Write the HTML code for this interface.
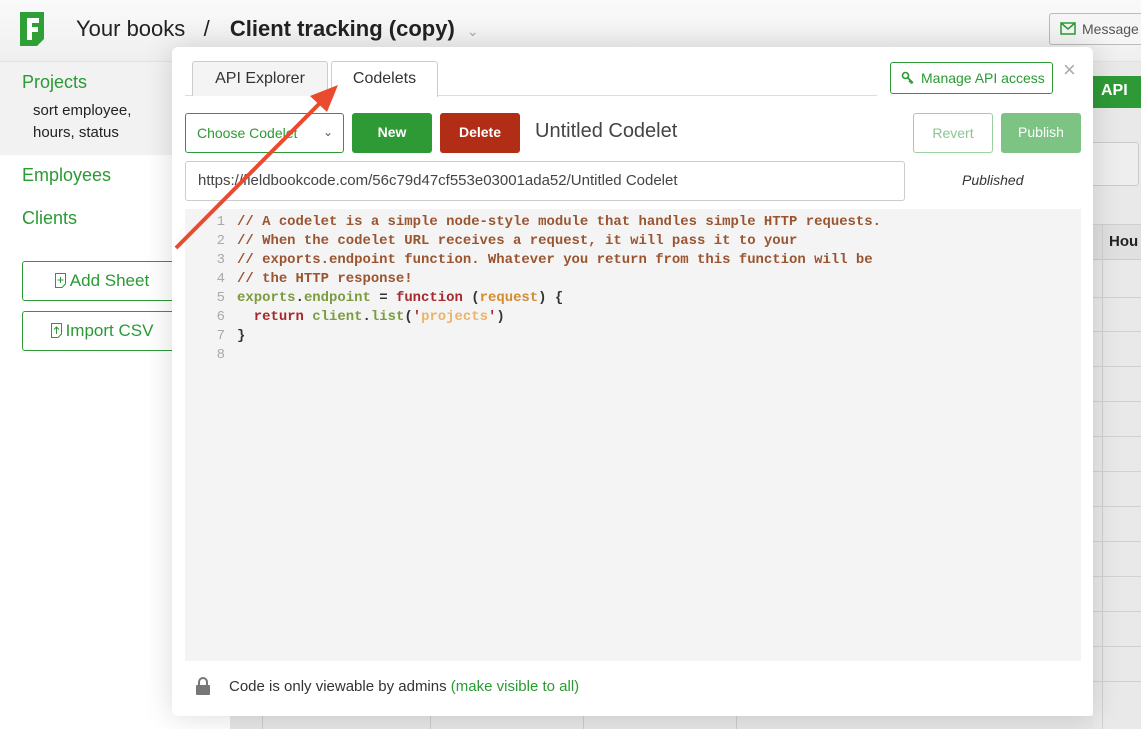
<!DOCTYPE html>
<html><head><meta charset="utf-8"><style>
*{box-sizing:border-box;margin:0;padding:0}
body{width:1141px;height:729px;overflow:hidden;position:relative;background:#fff;font-family:"Liberation Sans",sans-serif;color:#333}
.top{position:absolute;left:0;top:0;width:1141px;height:62px;background:linear-gradient(#fafafa,#efefef);border-bottom:1px solid #e2e2e2}
.crumb{position:absolute;left:76px;top:16px;font-size:22px;color:#222;white-space:nowrap}
.crumb b{font-weight:bold;margin-left:14px}
.msg{position:absolute;left:1049px;top:13px;width:100px;height:32px;border:1px solid #bbb;border-radius:3px;background:#f5f5f5;font-size:14px;padding:7px 0 0 32px;color:#555}
.side{position:absolute;left:0;top:62px;width:172px;height:667px;background:#fff}
.proj{position:absolute;left:0;top:62px;width:172px;height:93px;background:#f2f2f2}
.g{color:#2a9a33;font-size:18px;position:absolute;left:22px}
.sb{position:absolute;left:22px;width:160px;height:40px;border:1px solid #2e9a36;border-radius:3px;color:#2a9a33;font-size:17px;text-align:center;padding-top:9px}
.sb svg{vertical-align:-2px;margin-right:4px}
.right{position:absolute;left:1093px;top:62px;width:48px;height:667px;background:#e9e9e9}
.hl{position:absolute;left:1093px;width:48px;height:1px;background:#d2d2d2}
.modal{position:absolute;left:172px;top:47px;width:921px;height:669px;background:#fff;border-radius:6px;box-shadow:0 0 30px rgba(0,0,0,.15)}
.tab{position:absolute;top:14px;height:35px;border:1px solid #ccc;border-bottom:none;border-radius:3px 3px 0 0;font-size:16px;text-align:center;padding-top:8px;color:#333}
.btn{position:absolute;height:40px;border-radius:3px;font-size:15px;text-align:center;padding-top:11px}
.code{position:absolute;left:13px;top:162px;width:896px;height:452px;background:#f4f4f4;font-family:"Liberation Mono",monospace;font-size:13.95px;line-height:19px;padding-top:4px;white-space:pre;font-weight:bold}
.ln{display:inline-block;width:52px;text-align:right;padding-right:12px;color:#aaa;font-weight:normal}
.c{color:#9a5530}.e{color:#7b9c3e}.f{color:#a5282c}.r{color:#d48c32}.s{color:#eab46a}.k{color:#a5282c}
</style></head><body>
<div class="top"></div>
<svg style="position:absolute;left:20px;top:12px" width="25" height="35"><path d="M0 0 H24 V27 L17 34 H0 Z" fill="#2ea036"/><path d="M7 6 H19 V11 H12 V15 H18 V20 H12 V28 H7 Z" fill="#fff"/></svg>
<div class="crumb">Your books &nbsp;&nbsp;/ <b>Client tracking (copy)</b> <span style="font-size:14px;color:#aaa;margin-left:6px">⌄</span></div>
<div class="msg">Message</div>
<svg style="position:absolute;left:1060px;top:22px" width="16" height="13"><rect x="1" y="1" width="14" height="11" fill="none" stroke="#2a9a33" stroke-width="1.5"/><path d="M1 1 L8 7 L15 1" fill="none" stroke="#2a9a33" stroke-width="1.5"/></svg>
<div class="side"></div>
<div class="proj"></div>
<div class="g" style="top:72px">Projects</div>
<div style="position:absolute;left:33px;top:100px;font-size:15px;line-height:22px;color:#222">sort employee,<br>hours, status</div>
<div class="g" style="top:165px">Employees</div>
<div class="g" style="top:208px">Clients</div>
<div class="sb" style="top:261px"><svg width="11" height="15"><path d="M0.5 0.5 H10.5 V11 L7 14.5 H0.5 Z" fill="none" stroke="#2a9a33"/><path d="M5.5 4 V10 M2.5 7 H8.5" stroke="#2a9a33"/></svg>Add Sheet</div>
<div class="sb" style="top:311px"><svg width="11" height="15"><path d="M0.5 0.5 H10.5 V11 L7 14.5 H0.5 Z" fill="none" stroke="#2a9a33"/><path d="M5.5 4 V11 M3 6.5 L5.5 4 L8 6.5" fill="none" stroke="#2a9a33"/></svg>Import CSV</div>
<div class="right"></div>
<div style="position:absolute;left:1093px;top:76px;width:48px;height:32px;background:#2e9a36;color:#fff;font-weight:bold;font-size:16px;padding:6px 0 0 8px">API</div>
<div style="position:absolute;left:1093px;top:142px;width:46px;height:44px;border:1px solid #ccc;border-left:none;border-radius:0 3px 3px 0;background:#eee"></div>
<div style="position:absolute;left:1093px;top:224px;width:48px;height:36px;background:#e0e0e0;border-top:1px solid #d0d0d0;border-bottom:1px solid #ccc"></div>
<div style="position:absolute;left:1109px;top:233px;font-size:15px;font-weight:bold;color:#222">Hou</div>
<div style="position:absolute;left:1102px;top:224px;width:1px;height:505px;background:#d2d2d2"></div>
<div class="hl" style="top:297px"></div><div class="hl" style="top:331px"></div><div class="hl" style="top:366px"></div><div class="hl" style="top:401px"></div><div class="hl" style="top:436px"></div><div class="hl" style="top:471px"></div><div class="hl" style="top:506px"></div><div class="hl" style="top:541px"></div><div class="hl" style="top:576px"></div><div class="hl" style="top:611px"></div><div class="hl" style="top:646px"></div><div class="hl" style="top:681px"></div>
<div style="position:absolute;left:230px;top:716px;width:863px;height:13px;background:#e6e6e6"></div>
<div style="position:absolute;left:262px;top:716px;width:1px;height:13px;background:#ccc"></div>
<div style="position:absolute;left:430px;top:716px;width:1px;height:13px;background:#ccc"></div>
<div style="position:absolute;left:583px;top:716px;width:1px;height:13px;background:#ccc"></div>
<div style="position:absolute;left:736px;top:716px;width:1px;height:13px;background:#ccc"></div>

<div class="modal">
<div style="position:absolute;left:13px;top:48px;width:692px;height:1px;background:#ddd"></div>
<div class="tab" style="left:20px;width:136px;background:#f4f4f4">API Explorer</div>
<div class="tab" style="left:159px;width:107px;background:#fff;height:36px">Codelets</div>
<div style="position:absolute;left:718px;top:15px;width:163px;height:32px;border:1px solid #2e9a36;border-radius:3px;color:#2a9a33;font-size:14px;padding:7px 0 0 30px">Manage API access</div>
<svg style="position:absolute;left:729px;top:24px" width="14" height="14"><circle cx="4.5" cy="4.5" r="3" fill="none" stroke="#2a9a33" stroke-width="1.6"/><path d="M6.5 6.5 L12 12 M9.5 9.5 L8 11 M11 11 L9.5 12.5" stroke="#2a9a33" stroke-width="1.6"/></svg>
<div style="position:absolute;left:891px;top:12px;font-size:22px;color:#aaa;line-height:22px">×</div>
<div class="btn" style="left:13px;top:66px;width:159px;border:1px solid #2e9a36;color:#2a9a33;text-align:left;padding-left:11px;font-size:14px">Choose Codelet <span style="position:absolute;right:10px;color:#555;font-size:12px">⌄</span></div>
<div class="btn" style="left:180px;top:66px;width:80px;background:#2e9a36;color:#fff;font-weight:bold;font-size:14px">New</div>
<div class="btn" style="left:268px;top:66px;width:80px;background:#b22d15;color:#fff;font-weight:bold;font-size:14px">Delete</div>
<div style="position:absolute;left:363px;top:73px;font-size:20px;color:#444">Untitled Codelet</div>
<div class="btn" style="left:741px;top:66px;width:80px;border:1px solid #9ed0a2;color:#8cc592;font-size:14px">Revert</div>
<div class="btn" style="left:829px;top:66px;width:80px;background:#7cc384;color:#fff;font-size:14px">Publish</div>
<div style="position:absolute;left:13px;top:114px;width:720px;height:40px;border:1px solid #ccc;border-radius:3px;font-size:15px;color:#444;padding:10px 0 0 12px">https://fieldbookcode.com/56c79d47cf553e03001ada52/Untitled Codelet</div>
<div style="position:absolute;left:790px;top:125px;font-size:14px;font-style:italic;color:#333">Published</div>
<div class="code"><span class="ln">1</span><span class="c">// A codelet is a simple node-style module that handles simple HTTP requests.</span>
<span class="ln">2</span><span class="c">// When the codelet URL receives a request, it will pass it to your</span>
<span class="ln">3</span><span class="c">// exports.endpoint function. Whatever you return from this function will be</span>
<span class="ln">4</span><span class="c">// the HTTP response!</span>
<span class="ln">5</span><span class="e">exports</span>.<span class="e">endpoint</span> = <span class="f">function</span> (<span class="r">request</span>) {
<span class="ln">6</span>  <span class="k">return</span> <span class="e">client</span>.<span class="e">list</span>(<span class="k">'</span><span class="s">projects</span><span class="k">'</span>)
<span class="ln">7</span>}
<span class="ln">8</span></div>
<svg style="position:absolute;left:23px;top:630px" width="16" height="19"><path d="M4 8 V5 a4 4 0 0 1 8 0 V8" fill="none" stroke="#777" stroke-width="2"/><rect x="1" y="8" width="14" height="10" rx="1" fill="#777"/></svg>
<div style="position:absolute;left:57px;top:631px;font-size:15px;color:#333">Code is only viewable by admins <span style="color:#2a9a33">(make visible to all)</span></div>
</div>
<svg style="position:absolute;left:0;top:0" width="400" height="300"><line x1="176" y1="248" x2="322" y2="101" stroke="#ea4a2e" stroke-width="4"/><polygon points="338,85 310,96 327,112" fill="#ea4a2e"/></svg>
</body></html>
